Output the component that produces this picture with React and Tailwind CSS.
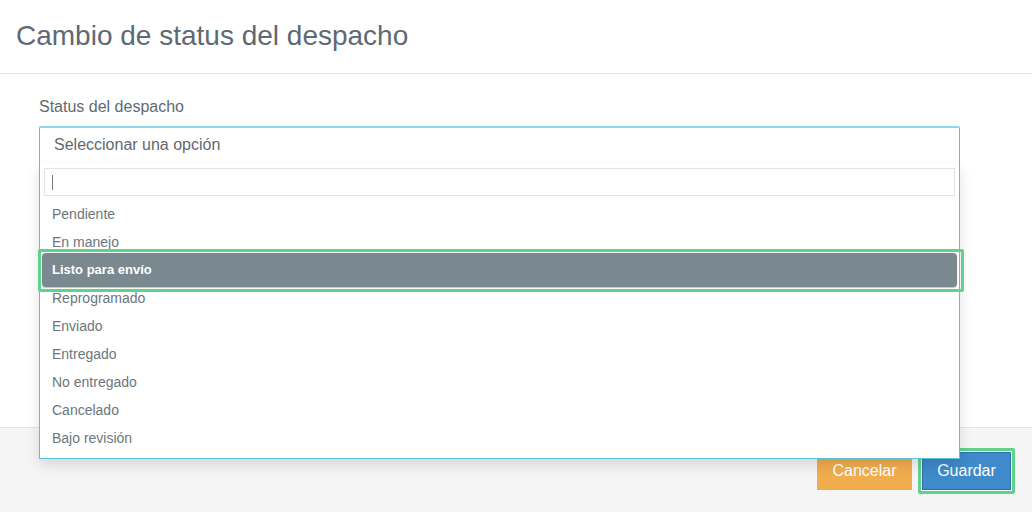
import { useState } from "react";

const options = [
  "Pendiente",
  "En manejo",
  "Listo para envío",
  "Reprogramado",
  "Enviado",
  "Entregado",
  "No entregado",
  "Cancelado",
  "Bajo revisión",
];

export default function App() {
  const [active] = useState("Listo para envío");

  return (
    <div
      className="w-[1032px] h-[512px] bg-white flex flex-col overflow-hidden"
      style={{ fontFamily: '"Liberation Sans", Arial, sans-serif' }}
    >
      {/* Header */}
      <div className="h-[74px] border-b border-[#e5e5e5] flex items-center px-4 shrink-0">
        <h1 className="text-[28px] text-[#5e6a73] leading-none mt-[-2px]">
          Cambio de status del despacho
        </h1>
      </div>

      {/* Body */}
      <div className="flex-1 px-[39px] pt-[24px] relative z-10">
        <label className="block text-[16px] text-[#5f6a72] leading-[18px] mb-[10px]">
          Status del despacho
        </label>
        <div className="relative w-[921px]">
          <div className="h-[38px] border border-[#5bc0de] border-t-2 border-t-[#8fd6ee] border-b-0 rounded-t-[2px] bg-white flex items-center px-[14px] pb-[2px] text-[16px] text-[#5f6a72]">
            Seleccionar una opción
          </div>
          {/* Open menu */}
          <div className="absolute left-0 top-[38px] w-[921px] bg-white border border-[#5bc0de] border-t-0 shadow-[0_6px_12px_rgba(0,0,0,0.12)] pb-[6px]">
            <div className="px-[4px] pt-[4px]">
              <div className="h-[28px] border border-[#e1e4e5] bg-white flex items-center px-[7px]">
                <span className="w-px h-[15px] bg-[#777]" />
              </div>
            </div>
            <ul className="pt-[4px] px-[1px]">
              {options.map((o) => (
                <li
                  key={o}
                  className={
                    o === active
                      ? "relative h-[34px] mt-[-3px] mb-[-3px] mx-px rounded-[4px] bg-[#7a8890] text-white font-bold flex items-center px-[10px] text-[13px] shadow-[0_1px_1px_rgba(0,0,0,0.25)] z-10"
                      : "h-[28px] flex items-center px-[11px] text-[14px] text-[#6c767d]"
                  }
                >
                  {o}
                  {o === active && (
                    <span className="absolute left-[-4px] right-[-7px] top-[-4px] bottom-[-5px] border-[3px] border-[#5fd38c] rounded-[2px] pointer-events-none" />
                  )}
                </li>
              ))}
            </ul>
          </div>
        </div>
      </div>

      {/* Footer */}
      <div className="h-[85px] shrink-0 bg-[#f5f5f5] border-t border-[#e5e5e5] flex items-end justify-end gap-[6px] pr-[17px] pb-[18px]">
        <button className="w-[95px] h-[38px] bg-[#f0ad4e] text-white text-[16px] flex items-center justify-center mb-[4px]">
          Cancelar
        </button>
        <span className="border-[3px] border-[#5fd38c] rounded-[2px] p-px">
          <button className="w-[89px] h-[38px] bg-[#3e8acb] border border-[#2f6ea7] text-white text-[16px] flex items-center justify-center">
            Guardar
          </button>
        </span>
      </div>
    </div>
  );
}
